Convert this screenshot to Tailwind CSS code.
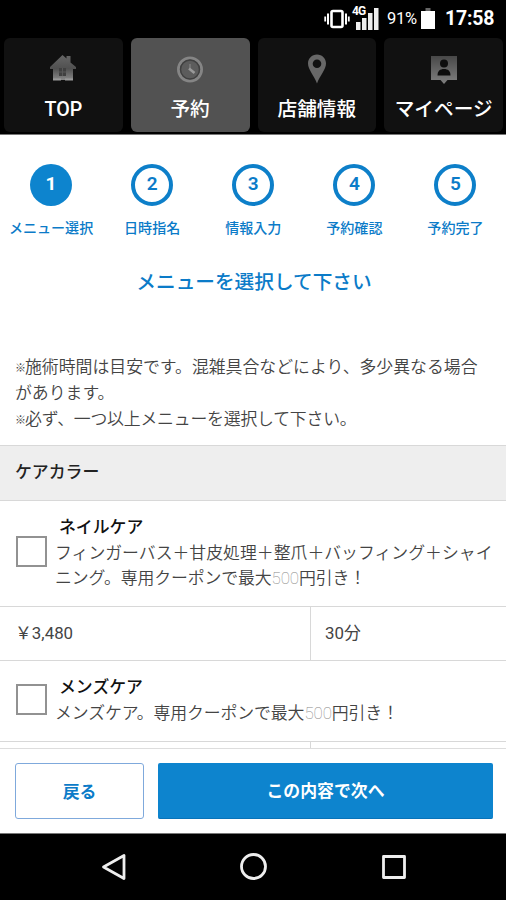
<!DOCTYPE html>
<html lang="ja">
<head>
<meta charset="utf-8">
<title>予約</title>
<script src="https://cdn.jsdelivr.net/npm/@tailwindcss/browser@4"></script>
</head>
<body class="w-[506px] h-[900px] overflow-hidden bg-white flex flex-col font-[Roboto,'Noto_Sans_CJK_JP',sans-serif] text-[16.87px] leading-[25.3px] text-[#444]">
  <!-- Status bar -->
  <header class="h-[135px] shrink-0 bg-black border-b border-[#777] flex flex-col text-white">
    <div class="h-[38px] shrink-0 flex items-center justify-end pr-[11px] pb-[1px]">
      <svg class="w-[26px] h-[22px] mr-[3px]" viewBox="0 0 26 22" fill="none" stroke="#fff">
        <rect x="7.5" y="3" width="11" height="16" rx="1.5" stroke-width="2.6"/>
        <path d="M4 5.5v11M22 5.5v11" stroke-width="2"/><path d="M1.2 8.5v5M24.8 8.5v5" stroke-width="1.8"/>
      </svg>
      <div class="relative w-[26px] h-[26px] mr-[8px]">
        <svg class="w-[26px] h-[26px]" viewBox="0 0 26 26" fill="#eee"><path d="M3 16h4.500v8H3zM9 12h4.500v12H9zM15 7h4.500v17H15zM21 2h4.500v22H21z"/></svg>
        <span class="absolute -left-px -top-px text-[12px] leading-[12px] font-bold tracking-[-0.8px] [text-shadow:0_0_2px_#000,0_0_1px_#000]">4G</span>
      </div>
      <span class="text-[16.500px] w-[32px] tracking-[-0.3px]">91%</span>
      <svg class="w-[14px] h-[21px] ml-[2px] mr-[10px]" viewBox="0 0 14 21"><path d="M4.500 0h5v3h-5z" fill="#666"/><path d="M0 3h14v18H0z" fill="#fff"/></svg>
      <span class="text-[19.500px] font-bold w-[50px] whitespace-nowrap tracking-[-0.2px]">17:58</span>
    </div>
    <!-- Main tabs -->
    <nav class="h-[94px] grid grid-cols-4 gap-[8px] pl-[4px] pr-[3px] text-[19.67px] leading-[28px] font-medium">
      <div class="bg-[#111] rounded-[6px] flex flex-col items-center pt-[14px]">
        <svg class="w-[32px] h-[34px]" viewBox="0 0 32 34"><defs><linearGradient id="g" x2="0" y2="1"><stop stop-color="#666"/><stop offset=".55" stop-color="#505050"/><stop offset="1" stop-color="#888"/></linearGradient></defs>
          <path d="M3 15 15.500 3l4 3.500V4h4v6.500L29 15v2h-3v11H6V17H3z" fill="url(#g)"/><path d="M12 16h7v8h-7z" fill="#404040"/><path d="M15.500 16v8M12 20h7" stroke="#585858"/><path d="M6 27.500h8m4 0h8" stroke="#999" stroke-width="2"/></svg>
        <span class="mt-[10px]">TOP</span>
      </div>
      <div class="bg-[#525252] rounded-[6px] flex flex-col items-center pt-[14px]">
        <svg class="w-[32px] h-[34px]" viewBox="0 0 32 34" fill="none"><circle cx="16" cy="17.500" r="11.500" fill="#5c5c5c" stroke="#858585" stroke-width="3"/><circle cx="16" cy="17.500" r="9.500" stroke="#404040" stroke-width="1.500"/><path d="M16 12v5.500" stroke="#777" stroke-width="1.800"/><path d="M15 16.500l5.500 4.500" stroke="#999" stroke-width="2.600"/></svg>
        <span class="mt-[10px]">予約</span>
      </div>
      <div class="bg-[#111] rounded-[6px] flex flex-col items-center pt-[14px]">
        <svg class="w-[32px] h-[34px]" viewBox="0 0 32 34"><path fill-rule="evenodd" d="M16 2.500c-5.200 0-9 4-9 9 0 6 6 12 9 20 3-8 9-14 9-20 0-5-3.800-9-9-9zm0 5a4.300 4.300 0 1 1 0 8.600 4.300 4.300 0 0 1 0-8.600z" fill="#686868"/></svg>
        <span class="mt-[10px]">店舗情報</span>
      </div>
      <div class="bg-[#111] rounded-[6px] flex flex-col items-center pt-[14px]">
        <svg class="w-[32px] h-[34px]" viewBox="0 0 32 34"><defs><linearGradient id="p" x2="0" y2="1"><stop stop-color="#484848"/><stop offset="1" stop-color="#808080"/></linearGradient></defs><path d="M3 4h26v24H19.500L16 32l-3.500-4H3z" fill="url(#p)"/><circle cx="16" cy="11.500" r="4" fill="#0d0d0d"/><path d="M9.500 23.500c0-4.500 2.500-6.500 6.500-6.500s6.500 2 6.500 6.500z" fill="#0d0d0d"/></svg>
        <span class="mt-[10px] whitespace-nowrap">マイページ</span>
      </div>
    </nav>
  </header>

  <main class="h-[613px] shrink-0 overflow-hidden">
    <!-- Booking steps -->
    <ol class="grid grid-cols-5 pt-[29px] pl-[0.5px] text-[#0b7bc8] text-center text-[14.05px] leading-[20px] font-medium">
      <li class="flex flex-col items-center gap-[12px]"><span class="size-[42px] rounded-full bg-[#0d84ce] text-white text-[19px] font-bold flex items-center justify-center pb-[2px]">1</span><span class="whitespace-nowrap">メニュー選択</span></li>
      <li class="flex flex-col items-center gap-[12px]"><span class="size-[42px] rounded-full border-4 border-[#0d7fc9] text-[19px] flex items-center justify-center pb-[2px] font-semibold">2</span><span>日時指名</span></li>
      <li class="flex flex-col items-center gap-[12px]"><span class="size-[42px] rounded-full border-4 border-[#0d7fc9] text-[19px] flex items-center justify-center pb-[2px] font-semibold">3</span><span>情報入力</span></li>
      <li class="flex flex-col items-center gap-[12px]"><span class="size-[42px] rounded-full border-4 border-[#0d7fc9] text-[19px] flex items-center justify-center pb-[2px] font-semibold">4</span><span>予約確認</span></li>
      <li class="flex flex-col items-center gap-[12px]"><span class="size-[42px] rounded-full border-4 border-[#0d7fc9] text-[19px] flex items-center justify-center pb-[2px] font-semibold">5</span><span>予約完了</span></li>
    </ol>
    <h1 class="mt-[30px] pl-[2px] text-center text-[19.67px] leading-[30px] text-[#0b7bc8] font-medium">メニューを選択して下さい</h1>

    <div class="mt-[57px] h-[90px] pl-[15px] font-[350] whitespace-nowrap">
      <p><span class="inline-block w-[10px] text-[11px] align-[1px] font-medium">※</span>施術時間は目安です。混雑具合などにより、多少異なる場合<br>があります。</p>
      <p><span class="inline-block w-[10px] text-[11px] align-[1px] font-medium">※</span><span class="tracking-[-0.2px]">必ず、一つ以上メニューを選択して下さい。</span></p>
    </div>

    <!-- Menu list -->
    <h2 class="h-[56px] bg-[#eee] border-y border-[#d8d8d8] flex items-center pl-[15px] text-[#222] font-medium">ケアカラー</h2>
    <section class="h-[105px] flex pl-[16px] pt-[14px]">
      <span class="size-[31px] mt-[21px] mr-[8px] border-2 border-[#929292] shrink-0"></span>
      <div class="whitespace-nowrap font-[350]">
        <h3 class="pl-[4px] text-[#111] font-medium">ネイルケア</h3>
        <p class="pt-[0.5px]">フィンガーバス＋甘皮処理＋整爪＋バッフィング＋シャイ<br><span class="tracking-[-0.1px]">ニング。専用クーポンで最大<span class="font-thin text-[#888]">500</span>円引き！</span></p>
      </div>
    </section>
    <div class="h-[55px] border-y border-[#d8d8d8] flex items-center">
      <span class="w-[311px] h-full border-r border-[#d8d8d8] pl-[15px] flex items-center">￥3,480</span>
      <span class="pl-[14px]">30分</span>
    </div>
    <section class="h-[80px] flex pl-[16px] pt-[14px]">
      <span class="size-[31px] mt-[9px] mr-[8px] border-2 border-[#929292] shrink-0"></span>
      <div class="whitespace-nowrap font-[350]">
        <h3 class="pl-[4px] text-[#111] font-medium">メンズケア</h3>
        <p class="pt-[0.5px] tracking-[-0.1px]">メンズケア。専用クーポンで最大<span class="font-thin text-[#888]">500</span>円引き！</p>
      </div>
    </section>
    <div class="h-[55px] border-t border-[#d8d8d8]"><span class="block w-[311px] h-full border-r border-[#d8d8d8]"></span></div>
  </main>

  <!-- Actions -->
  <div class="h-[85px] shrink-0 border-t border-[#ddd] pl-[15px] pr-[13px] pt-[14px] flex gap-[14px] font-bold">
    <button class="w-[129px] h-[56px] border border-[#7fa9dc] rounded-[3px] text-[#0b7bc8] pt-[3px]">戻る</button>
    <button class="w-[335px] h-[56px] bg-[#0d84ce] border-b border-[#0873b9] rounded-[2px] text-white pt-[3px]">この内容で次へ</button>
  </div>

  <!-- System navigation -->
  <footer class="h-[67px] shrink-0 bg-black border-t border-[#777] flex justify-center items-center gap-[112px] pl-[2px]">
    <svg class="size-[28px]" viewBox="0 0 28 28" fill="none" stroke="#eee" stroke-width="2.800" stroke-linejoin="round"><path d="M24 2.500v23L3.500 14z"/></svg>
    <svg class="size-[28px]" viewBox="0 0 28 28" fill="none" stroke="#eee" stroke-width="2.800"><circle cx="13.500" cy="13.500" r="12"/></svg>
    <svg class="size-[28px]" viewBox="0 0 28 28" fill="none" stroke="#eee" stroke-width="2.800" stroke-linejoin="round"><path d="M3.500 3.500h21v21h-21z"/></svg>
  </footer>
</body>
</html>
